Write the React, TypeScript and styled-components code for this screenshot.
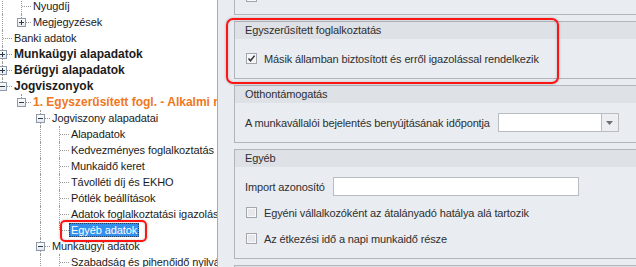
import React from 'react';
import styled, { createGlobalStyle, css } from 'styled-components';

const GlobalStyle = createGlobalStyle`
  html, body {
    margin: 0;
    padding: 0;
    overflow: hidden;
    background: #ffffff;
  }
  * {
    box-sizing: border-box;
  }
`;

type TreeItem = {
  label: string;
  level: number;
  guides: boolean[];
  last?: boolean;
  expander?: '+' | '-';
  bold?: boolean;
  orange?: boolean;
  selected?: boolean;
};

const treeItems: TreeItem[] = [
  { label: 'Nyugdíj', level: 1, guides: [true] },
  { label: 'Megjegyzések', level: 1, guides: [true], last: true, expander: '+' },
  { label: 'Banki adatok', level: 0, guides: [] },
  { label: 'Munkaügyi alapadatok', level: 0, guides: [], bold: true, expander: '+' },
  { label: 'Bérügyi alapadatok', level: 0, guides: [], bold: true, expander: '+' },
  { label: 'Jogviszonyok', level: 0, guides: [], bold: true, expander: '-', last: true },
  {
    label: '1. Egyszerűsített fogl. - Alkalmi munka',
    level: 1,
    guides: [false],
    bold: true,
    orange: true,
    expander: '-',
    last: true,
  },
  { label: 'Jogviszony alapadatai', level: 2, guides: [false, false], expander: '-' },
  { label: 'Alapadatok', level: 3, guides: [false, false, true] },
  { label: 'Kedvezményes foglalkoztatás', level: 3, guides: [false, false, true] },
  { label: 'Munkaidő keret', level: 3, guides: [false, false, true] },
  { label: 'Távolléti díj és EKHO', level: 3, guides: [false, false, true] },
  { label: 'Pótlék beállítások', level: 3, guides: [false, false, true] },
  { label: 'Adatok foglalkoztatási igazoláshoz', level: 3, guides: [false, false, true] },
  { label: 'Egyéb adatok', level: 3, guides: [false, false, true], last: true, selected: true },
  { label: 'Munkaügyi adatok', level: 2, guides: [false, false], expander: '-' },
  { label: 'Szabadság és pihenőidő nyilvántartás', level: 3, guides: [false, false, true] },
];

function App() {
  return (
    <>
      <GlobalStyle />
      <Screen>
        <TreePanel>
          <TreeList>
            {treeItems.map((item) => (
              <TreeRow key={item.label}>
                {item.guides.map((on, i) => (
                  <Guide key={i} $on={on} />
                ))}
                <Connector $last={!!item.last}>
                  {item.expander && <Expander $open={item.expander === '-'} />}
                </Connector>
                <NodeLabel $bold={item.bold} $orange={item.orange} $selected={item.selected}>
                  {item.label}
                  {item.selected && <Highlight $kind="row" />}
                </NodeLabel>
              </TreeRow>
            ))}
          </TreeList>
        </TreePanel>

        <FormPanel>
          {/* group above, scrolled mostly out of view */}
          <Group $first>
            <GroupHeader>Foglalkoztatás</GroupHeader>
            <GroupBody $tight>
              <CheckRow>
                <CheckBox $checked={false} />
              </CheckRow>
            </GroupBody>
          </Group>

          <Group>
            <Highlight $kind="group" />
            <GroupHeader>Egyszerűsített foglalkoztatás</GroupHeader>
            <GroupBody>
              <CheckRow>
                <CheckBox $checked>
                  <svg width="9" height="9" viewBox="0 0 9 9">
                    <path d="M1.5 4.5 L3.5 6.8 L7.6 1.6" fill="none" stroke="#333" strokeWidth="1.5" />
                  </svg>
                </CheckBox>
                <span>Másik államban biztosított és erről igazolással rendelkezik</span>
              </CheckRow>
            </GroupBody>
          </Group>

          <Group>
            <GroupHeader>Otthontámogatás</GroupHeader>
            <GroupBody>
              <FieldRow>
                <span>A munkavállalói bejelentés benyújtásának időpontja</span>
                <Combo>
                  <ComboInput />
                  <ComboButton>
                    <svg width="7" height="4" viewBox="0 0 7 4">
                      <path d="M0 0 H7 L3.5 4 Z" fill="#6d6f73" />
                    </svg>
                  </ComboButton>
                </Combo>
              </FieldRow>
            </GroupBody>
          </Group>

          <Group>
            <GroupHeader>Egyéb</GroupHeader>
            <GroupBody>
              <FieldRow>
                <span>Import azonosító</span>
                <TextBox />
              </FieldRow>
              <CheckRow>
                <CheckBox $checked={false} />
                <span>Egyéni vállalkozóként az átalányadó hatálya alá tartozik</span>
              </CheckRow>
              <CheckRow>
                <CheckBox $checked={false} />
                <span>Az étkezési idő a napi munkaidő része</span>
              </CheckRow>
            </GroupBody>
          </Group>

          <Group>
            <GroupHeader>Megjegyzés</GroupHeader>
          </Group>
        </FormPanel>
      </Screen>
    </>
  );
}

export default App;

const uiFont = `'Liberation Sans', Arial, sans-serif`;

const Screen = styled.div`
  display: flex;
  width: 636px;
  height: 267px;
  overflow: hidden;
  font-family: ${uiFont};
  font-size: 11px;
`;

const TreePanel = styled.div`
  width: 218px;
  flex-shrink: 0;
  background: #ffffff;
  border-right: 1px solid #a7aaae;
  overflow: hidden;
`;

const TreeList = styled.div`
  margin: -2px 0 0 -7px;
  display: flex;
  flex-direction: column;
`;

const TreeRow = styled.div`
  display: flex;
  align-items: center;
  height: 16px;
  white-space: nowrap;
`;

const dotted = '1px dotted #9a9a9a';

const Guide = styled.span<{ $on: boolean }>`
  position: relative;
  width: 19px;
  height: 16px;
  flex-shrink: 0;
  ${({ $on }) =>
    $on &&
    css`
      &::before {
        content: '';
        position: absolute;
        left: 9px;
        top: 0;
        bottom: 0;
        border-left: ${dotted};
      }
    `}
`;

const Connector = styled.span<{ $last: boolean }>`
  position: relative;
  width: 19px;
  height: 16px;
  flex-shrink: 0;
  &::before {
    content: '';
    position: absolute;
    left: 9px;
    top: 0;
    height: ${({ $last }) => ($last ? '8px' : '16px')};
    border-left: ${dotted};
  }
  &::after {
    content: '';
    position: absolute;
    left: 10px;
    right: 0;
    top: 8px;
    border-top: ${dotted};
  }
`;

const Expander = styled.span<{ $open: boolean }>`
  position: absolute;
  z-index: 1;
  left: 5px;
  top: 4px;
  width: 9px;
  height: 9px;
  border: 1px solid #8f9aa8;
  background: linear-gradient(#ffffff, #e4e8ee);
  &::before {
    content: '';
    position: absolute;
    left: 1px;
    top: 3px;
    width: 5px;
    height: 1px;
    background: #2d3a4c;
  }
  ${({ $open }) =>
    !$open &&
    css`
      &::after {
        content: '';
        position: absolute;
        left: 3px;
        top: 1px;
        width: 1px;
        height: 5px;
        background: #2d3a4c;
      }
    `}
`;

const NodeLabel = styled.span<{ $bold?: boolean; $orange?: boolean; $selected?: boolean }>`
  position: relative;
  height: 14px;
  line-height: 14px;
  padding: 0 2px;
  letter-spacing: -0.1px;
  color: ${({ $orange }) => ($orange ? '#f07722' : '#1b1b1b')};
  ${({ $bold }) =>
    $bold &&
    css`
      font-weight: 700;
      font-size: 12px;
      letter-spacing: 0;
    `}
  ${({ $selected }) =>
    $selected &&
    css`
      background: #3390ec;
      color: #ffffff;
      outline: 1px dotted #1b3f6a;
      outline-offset: -1px;
    `}
`;

const Highlight = styled.span<{ $kind: 'row' | 'group' }>`
  position: absolute;
  z-index: 2;
  border: 2px solid #ff1414;
  pointer-events: none;
  box-shadow: 0 0 3px rgba(0, 0, 0, 0.25), inset 0 0 3px rgba(0, 0, 0, 0.2);
  ${({ $kind }) =>
    $kind === 'row'
      ? css`
          left: -9px;
          top: -3px;
          width: 87px;
          height: 22px;
          border-radius: 5px;
        `
      : css`
          left: -9px;
          top: -4px;
          width: 333px;
          height: 66px;
          border-radius: 7px;
        `}
`;

const FormPanel = styled.div`
  flex: 1;
  background: #e9ecf1;
  padding-left: 16px;
  overflow: hidden;
  display: flex;
  flex-direction: column;
  gap: 6px;
  color: #2f2f2f;
  letter-spacing: -0.13px;
`;

const Group = styled.div<{ $first?: boolean }>`
  position: relative;
  flex-shrink: 0;
  margin-right: -12px;
  border: 1px solid #b2b5ba;
  margin-top: ${({ $first }) => ($first ? '-41px' : '0')};
`;

const GroupHeader = styled.div`
  height: 17px;
  line-height: 17px;
  padding-left: 10px;
  background: #dee1e6;
`;

const GroupBody = styled.div<{ $tight?: boolean }>`
  display: flex;
  flex-direction: column;
  gap: 7px;
  padding: ${({ $tight }) => ($tight ? '10px 10px 8px' : '10px')};
`;

const CheckRow = styled.label`
  display: flex;
  align-items: center;
  gap: 7px;
  height: 19px;
  padding-left: 1px;
`;

const CheckBox = styled.span<{ $checked: boolean }>`
  display: flex;
  align-items: center;
  justify-content: center;
  width: 11px;
  height: 11px;
  border: 1px solid #a3a6ab;
  background: ${({ $checked }) => ($checked ? '#f3f4f6' : '#e6e8ec')};
  box-shadow: inset 0 0 0 1px #f7f8fa;
`;

const FieldRow = styled.div`
  display: flex;
  align-items: center;
  gap: 8px;
  height: 19px;
`;

const TextBox = styled.span`
  width: 246px;
  height: 19px;
  background: #ffffff;
  border: 1px solid #b9bcc1;
`;

const Combo = styled.span`
  display: flex;
  width: 121px;
  height: 19px;
  background: #ffffff;
  border: 1px solid #b9bcc1;
`;

const ComboInput = styled.span`
  flex: 1;
`;

const ComboButton = styled.span`
  display: flex;
  align-items: center;
  justify-content: center;
  width: 17px;
  border-left: 1px solid #b9bcc1;
  background: #eceef2;
`;
